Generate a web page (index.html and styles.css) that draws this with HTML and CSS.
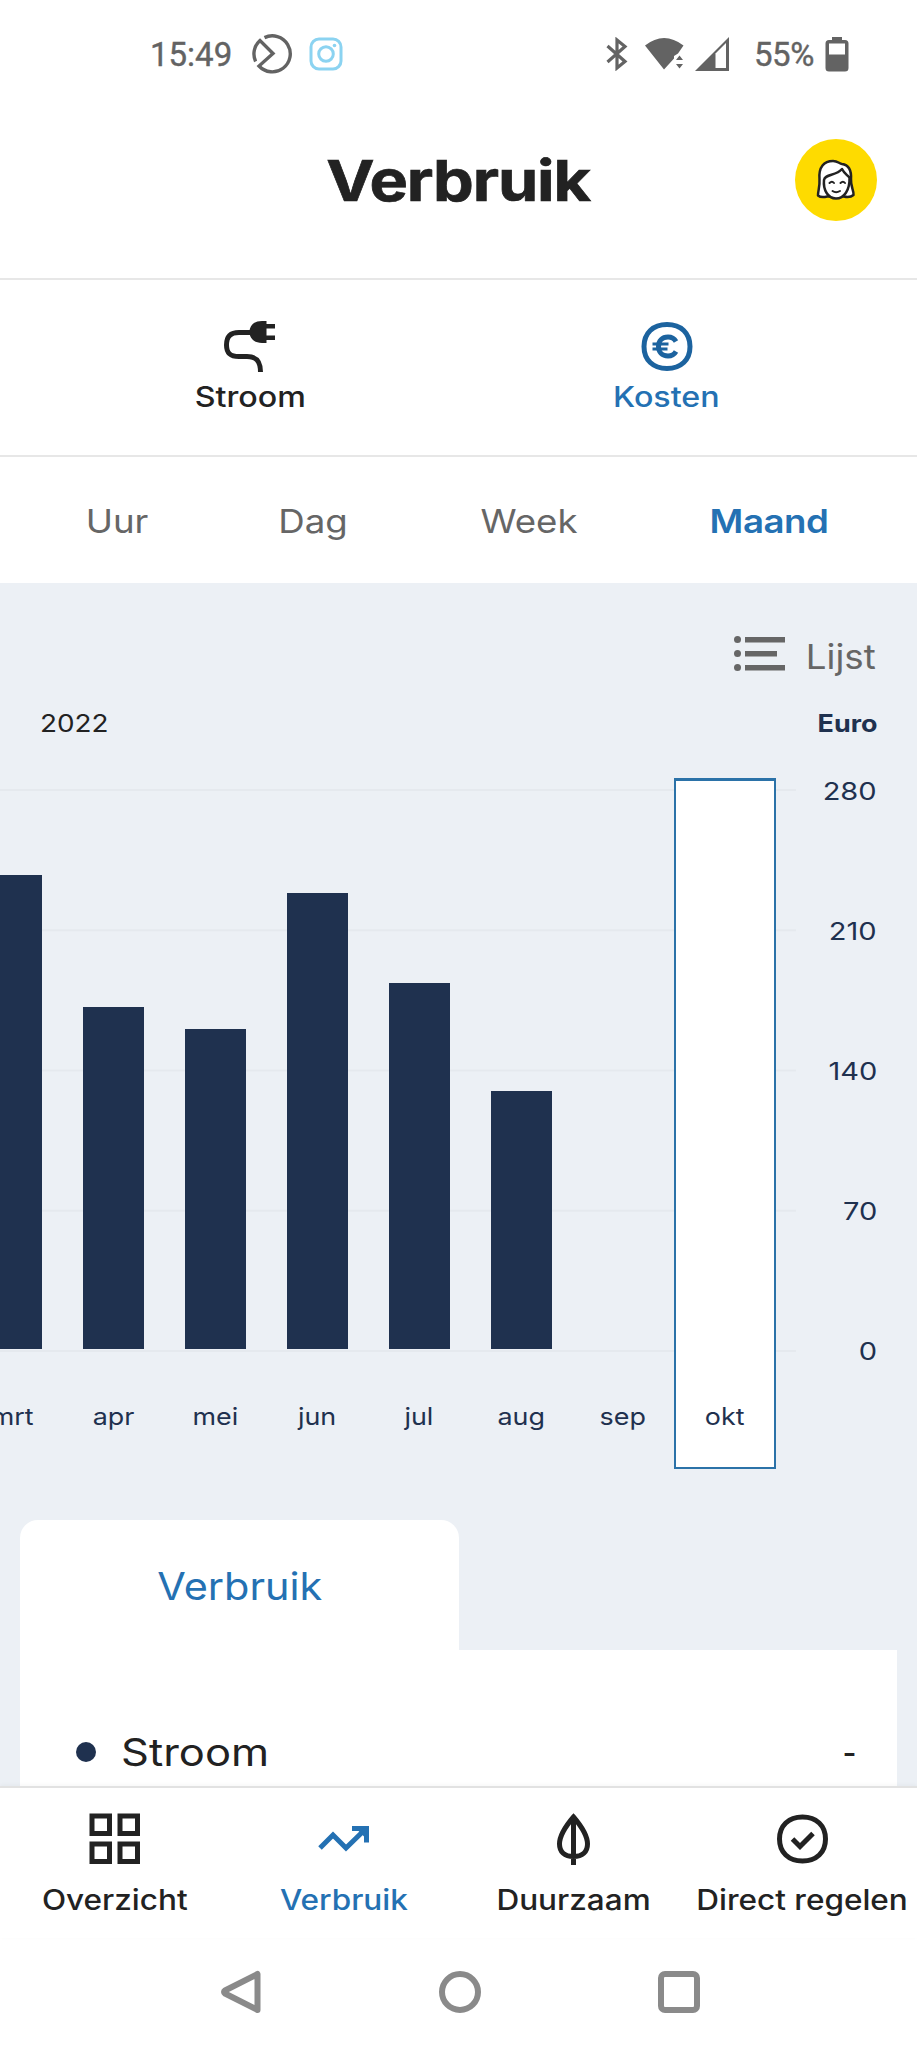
FILE: index.html
```html
<!DOCTYPE html>
<html lang="nl">
<head>
    <meta charset="UTF-8">
    <meta name="viewport" content="width=device-width, initial-scale=1.0">
    <title>Verbruik</title>
    <link rel="stylesheet" href="styles.css">
</head>
<body>
    <div class="status-bar">
        <div class="status-left">
            <span class="clock">15:49</span>
            <svg class="icon-data" width="40" height="40" viewBox="0 0 40 40" fill="none" stroke="#636363" stroke-width="3.4">
                <path d="M12.5 3.6A18 18 0 1 1 7 32L21 19.5L8 6.5A18 18 0 0 0 3.6 27.5"/>
            </svg>
            <svg class="icon-insta" width="34" height="34" viewBox="0 0 34 34" fill="none" stroke="#8bd3f1" stroke-width="3">
                <rect x="2" y="2" width="30" height="30" rx="8"/>
                <circle cx="17" cy="17" r="7.3"/>
                <circle cx="25.5" cy="8.5" r="1.8" fill="#8bd3f1" stroke="none"/>
            </svg>
        </div>
        <div class="status-right">
            <svg width="22" height="34" viewBox="0 0 22 34" fill="none" stroke="#636363" stroke-width="3.2">
                <path d="M1.5 9L19 24.5L11 31V3L19 9.5L1.5 25"/>
            </svg>
            <svg class="icon-wifi" width="40" height="34" viewBox="0 0 40 34" fill="#636363">
                <path d="M0 8.5Q19 -6.5 38.5 8.5L33 16.5L29 19V21.5L19 32.5Z"/>
                <path d="M31 23L34.5 18.5L38 23ZM31 27H38L34.5 31.5Z"/>
            </svg>
            <svg class="icon-signal" width="34" height="36" viewBox="0 0 34 36">
                <path d="M0 35L34 1V35Z" fill="#636363"/>
                <path d="M20.5 32V17.5L31 7V32Z" fill="#fff"/>
            </svg>
            <span class="battery-text">55%</span>
            <svg width="24" height="36" viewBox="0 0 24 36">
                <path d="M7 1H17V4H20Q23.5 4 23.5 7.5V32Q23.5 35.5 20 35.5H4Q.5 35.5 .5 32V7.5Q.5 4 4 4H7Z" fill="#636363"/>
                <rect x="4" y="7.5" width="16" height="11" fill="#fff"/>
            </svg>
        </div>
    </div>

    <header class="header">
        <h1>Verbruik</h1>
        <div class="avatar">
            <svg width="40" height="42" viewBox="0 0 40 42" fill="#fff" stroke="#222" stroke-width="2.5" stroke-linejoin="round" stroke-linecap="round">
                <path d="M3.5 20C2.5 8 8 2 17 2C22 2 23 4.5 26 5C33 6 35.5 11 35 20C34.5 28 38 31 37.5 36Q34 39 28 37.5H11Q5 39 2 36.5C2 31 4 28 3.5 20Z"/>
                <path d="M8 21C9 15 20 17 26 10C28 14 30 15 33.5 18.5C34 31 28 39.5 20 39.5C12 39.5 7 31 8 21Z"/>
                <path d="M13.5 24Q16 21.5 18 24M24.5 24Q27 21.5 29 24M16.5 32Q20 34.5 24 32" fill="none" stroke-width="2"/>
            </svg>
        </div>
    </header>

    <nav class="type-tabs">
        <a class="type-tab">
            <svg width="52" height="52" viewBox="0 0 52 52">
                <path d="M28 12.5H15C6 12.5 2.5 17 2.5 25S6 36.500 15 36.500H23C32 36.500 36.500 41 36.500 52" fill="none" stroke="#222" stroke-width="5"/>
                <path d="M42.500 1V4H51V8.500H42.500V15.500H51V20H42.500V23H38C29 23 25.500 17 25.500 12S29 1 38 1Z" fill="#222"/>
            </svg>
            <span>Stroom</span>
        </a>
        <a class="type-tab active">
            <svg width="52" height="52" viewBox="0 0 52 52" fill="none" stroke="#1c639f">
                <path d="M26 4.5C40 4.5 49 13 49 26.5S40 48.5 26 48.5S3 40 3 26.5S12 4.5 26 4.5Z" stroke-width="5"/>
                <path d="M35 21.5C33 18 30 17 27 17C21 17 17.5 21 17.5 26.5S21 36 27 36C30 36 33 35 35 31.5" stroke-width="5"/>
                <path d="M11.5 24H27.5M11.5 29H26.5" stroke-width="3"/>
            </svg>
            <span>Kosten</span>
        </a>
    </nav>

    <nav class="period-tabs">
        <a class="period uur">Uur</a>
        <a class="period dag">Dag</a>
        <a class="period week">Week</a>
        <a class="period maand active">Maand</a>
    </nav>

    <main class="content">
        <div class="list-toggle">
            <svg width="52" height="36" viewBox="0 0 52 36" fill="#666">
                <circle cx="3.5" cy="3.5" r="3.5"/><rect x="11" y="1" width="40" height="5.5"/>
                <circle cx="3.5" cy="17.5" r="3.5"/><rect x="11" y="15" width="32" height="5.5"/>
                <circle cx="3.5" cy="31.5" r="3.5"/><rect x="11" y="29" width="40" height="5.5"/>
            </svg>
            <span>Lijst</span>
        </div>

        <div class="chart-head">
            <span class="year">2022</span>
            <span class="unit">Euro</span>
        </div>

        <div class="chart">
            <div class="plot">
                <div class="month"><div class="bar" style="height: 474px"></div><span>mrt</span></div>
                <div class="month"><div class="bar" style="height: 342px"></div><span>apr</span></div>
                <div class="month"><div class="bar" style="height: 320px"></div><span>mei</span></div>
                <div class="month"><div class="bar" style="height: 456px"></div><span>jun</span></div>
                <div class="month"><div class="bar" style="height: 366px"></div><span>jul</span></div>
                <div class="month"><div class="bar" style="height: 258px"></div><span>aug</span></div>
                <div class="month"><span>sep</span></div>
                <div class="month selected"><span>okt</span></div>
            </div>
            <div class="axis">
                <span>280</span>
                <span>210</span>
                <span>140</span>
                <span>70</span>
                <span>0</span>
            </div>
        </div>

        <section class="details">
            <div class="details-tab"><span>Verbruik</span></div>
            <div class="details-panel">
                <span class="dot"></span>
                <span class="name">Stroom</span>
                <span class="value">-</span>
            </div>
        </section>
    </main>

    <nav class="bottom-nav">
        <a class="nav-item">
            <svg width="52" height="52" viewBox="0 0 52 52" fill="none" stroke="#222" stroke-width="5">
                <path d="M3 3H20.5V20.5H3ZM31 3H48.5V20.5H31ZM3 31H20.5V48.5H3ZM31 31H48.5V48.5H31Z"/>
            </svg>
            <span>Overzicht</span>
        </a>
        <a class="nav-item active">
            <svg width="52" height="52" viewBox="0 0 52 52" fill="none" stroke="#2471b3" stroke-width="5">
                <path d="M2 35L15 22L28 35L47 16.5"/>
                <path d="M34 15.5H48.5V29.5"/>
                <path d="M38 15.5H48.5V26Z" fill="#2471b3" stroke="none"/>
            </svg>
            <span>Verbruik</span>
        </a>
        <a class="nav-item">
            <svg width="52" height="52" viewBox="0 0 52 52" fill="none" stroke="#222" stroke-width="5">
                <path d="M26.5 4C20.5 11 12.5 21 12.500 31C12.5 39 17.5 43.5 26.5 43.5S40.5 39 40.5 31C40.5 21 32.5 11 26.5 4ZM26.5 5V52"/>
            </svg>
            <span>Duurzaam</span>
        </a>
        <a class="nav-item">
            <svg width="52" height="52" viewBox="0 0 52 52" fill="none" stroke="#222" stroke-width="5">
                <path d="M26.5 4C40.5 4 49.5 12.5 49.5 26S40.5 48 26.5 48S3.5 39.500 3.500 26S12.500 4 26.5 4Z"/>
                <path d="M16.5 26L24 33.500L37 20.500"/>
            </svg>
            <span>Direct regelen</span>
        </a>
    </nav>

    <div class="system-nav">
        <svg width="44" height="44" viewBox="0 0 44 44"><path d="M38.5 4V40L6 23.5Q4 22 6 20.5Z"/></svg>
        <svg width="44" height="44" viewBox="0 0 44 44"><circle cx="22" cy="22" r="18"/></svg>
        <svg width="44" height="44" viewBox="0 0 44 44"><rect x="4" y="4" width="36" height="36" rx="4"/></svg>
    </div>
</body>
</html>
```

FILE: styles.css
```css
* {
    box-sizing: border-box;
}

body {
    margin: 0;
    width: 917px;
    height: 2048px;
    overflow: hidden;
    display: flex;
    flex-direction: column;
    background: #fff;
    color: #222;
    font-family: Inter, "Liberation Sans", sans-serif;
}

svg {
    display: block;
    flex: none;
}

/* phone status bar */
.status-bar {
    height: 108px;
    padding: 0 68px 0 150px;
    display: flex;
    justify-content: space-between;
    align-items: center;
    font-family: Roboto, sans-serif;
    font-size: 33px;
    color: #636363;
    -webkit-text-stroke: 0.4px #636363;
}

.status-left,
.status-right {
    display: flex;
    align-items: center;
}

.icon-data {
    margin-left: 20px;
}

.icon-insta {
    margin-left: 17px;
}

.icon-wifi {
    margin-left: 17px;
}

.icon-signal {
    margin-left: 10px;
}

.battery-text {
    margin: 0 11px 0 25px;
    letter-spacing: -0.4px;
}

/* header */
.header {
    height: 172px;
    padding: 31px 40px 0 0;
    border-bottom: 2px solid #e7e7e7;
    display: grid;
    grid-template-columns: 1fr auto;
    align-items: start;
}

.header h1 {
    margin: 0 -121px 0 0;
    text-align: center;
    font-size: 57px;
    line-height: 84px;
    font-weight: 700;
    letter-spacing: -1px;
    -webkit-text-stroke: 0.7px #222;
    transform: scaleX(1.135);
}

.avatar {
    width: 82px;
    height: 82px;
    border-radius: 50%;
    background: #fedb00;
    display: flex;
    justify-content: center;
    align-items: center;
}

/* stroom / kosten */
.type-tabs {
    height: 177px;
    padding: 40px 42px 0;
    border-bottom: 2px solid #e7e7e7;
    display: flex;
}

.type-tab,
.nav-item {
    flex: 1;
    display: flex;
    flex-direction: column;
    align-items: center;
    font-size: 28px;
    line-height: 34px;
    font-weight: 500;
    white-space: nowrap;
}

.type-tab span {
    margin-top: 8px;
    transform: scaleX(1.15);
}

.active {
    color: #2471b3;
}

/* uur / dag / week / maand */
.period-tabs {
    height: 126px;
    padding: 1px 89px 0 87px;
    display: flex;
    justify-content: space-between;
    align-items: center;
    color: #666;
    font-size: 33px;
}

.period {
    display: flex;
    justify-content: center;
    transform: scaleX(1.11);
}

.uur {
    width: 60px;
}

.dag {
    width: 68px;
}

.week {
    width: 98px;
}

.maand {
    width: 118px;
}

.period.active {
    color: #2471b3;
    font-weight: 600;
    letter-spacing: -0.4px;
}

.content {
    height: 1203px;
    background: #ecf0f5;
    overflow: hidden;
}

.list-toggle {
    padding: 35px 41px 0 0;
    height: 111px;
    display: flex;
    justify-content: flex-end;
    align-items: center;
    gap: 25px;
    color: #666;
    font-size: 34px;
}

.list-toggle svg {
    margin-bottom: 4px;
}

.list-toggle span {
    transform: scaleX(1.08);
    transform-origin: right;
}

.chart-head {
    height: 84px;
    padding: 15px 40px 0;
    display: flex;
    justify-content: space-between;
    font-size: 24px;
    line-height: 30px;
}

.year {
    transform: scaleX(1.16);
    transform-origin: left;
}

.unit {
    font-weight: 700;
    color: #1f314f;
    transform: scaleX(1.12);
    transform-origin: right;
}

.chart {
    height: 691px;
    display: flex;
    justify-content: space-between;
    color: #1f314f;
    font-size: 24px;
}

.plot {
    width: 796px;
    display: flex;
    background: linear-gradient(#e5e9ee 2px, transparent 2px) 0 11px / 100% 140.25px repeat-y;
    padding-right: 20px;
    justify-content: flex-end;
    overflow: hidden;
}

.month {
    flex: none;
    width: 101.9px;
    display: flex;
    flex-direction: column;
    align-items: center;
    justify-content: flex-end;
}

.month span {
    height: 120px;
    padding-top: 53px;
    line-height: 30px;
    transform: scaleX(1.12);
}

.month.selected {
    background: #fff;
    border: 2px solid #2b72a8;
    border-top-width: 3px;
}

.month.selected span {
    height: 118px;
}

.bar {
    width: 61px;
    background: #1f314f;
}

.axis {
    height: 590px;
    margin-top: -1px;
    padding-right: 40px;
    display: flex;
    flex-direction: column;
    justify-content: space-between;
    align-items: flex-end;
    line-height: 30px;
}

.axis span {
    transform: scaleX(1.21);
    transform-origin: right;
}

/* details card */
.details {
    margin: 51px 20px 0;
}

.details-tab {
    width: 439px;
    height: 130px;
    border-radius: 18px 18px 0 0;
    background: #fff;
    color: #2471b3;
    font-size: 38px;
    line-height: 132px;
    text-align: center;
}

.details-tab span {
    display: inline-block;
    transform: scaleX(1.09);
}

.details-panel {
    height: 204px;
    padding: 0 41px 1px 56px;
    background: #fff;
    display: flex;
    align-items: center;
    font-size: 38px;
}

.dot {
    width: 20px;
    height: 20px;
    border-radius: 50%;
    background: #1f314f;
}

.name {
    margin-left: 25px;
    transform: scaleX(1.145);
    transform-origin: left;
}

.value {
    margin-left: auto;
    transform: scaleX(0.8);
    transform-origin: right;
}

.bottom-nav {
    height: 152px;
    padding-top: 25px;
    border-top: 2px solid #e2e2e2;
    display: flex;
    position: relative;
    box-shadow: 0 -1px 4px rgba(0, 0, 0, 0.04);
}

.nav-item {
    flex: 0 0 25%;
}

.nav-item span {
    margin-top: 18px;
    transform: scaleX(1.125);
}

.system-nav {
    height: 110px;
    padding: 32px 216px 0 219px;
    display: flex;
    justify-content: space-between;
}

.system-nav svg {
    fill: none;
    stroke: #8a8a8a;
    stroke-width: 6;
    stroke-linejoin: round;
}
```
